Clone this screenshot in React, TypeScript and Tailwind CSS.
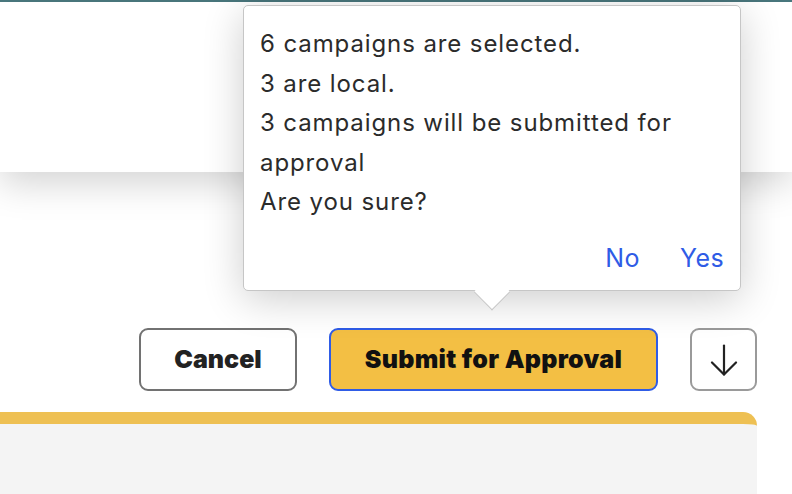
import React from "react";

function DownArrow() {
  return (
    <svg width="28" height="32" viewBox="0 0 28 32" fill="none" stroke="#222" strokeWidth="2.2" strokeLinecap="round" strokeLinejoin="round">
      <path d="M14 1.5v29" />
      <path d="M2 18.5l12 12 12-12" />
    </svg>
  );
}

export default function App() {
  return (
    <div className="relative flex h-[494px] w-[792px] flex-col overflow-hidden bg-white font-['Inter',sans-serif]">
      <div className="h-[2px] shrink-0 bg-[#4b7a80]" />
      <div className="relative z-0 h-[170px] shrink-0 bg-white shadow-[0_12px_34px_rgba(0,0,0,0.17)]" />

      {/* action row */}
      <div className="mt-[156px] flex shrink-0 justify-end gap-8 pr-[35px]">
        <button className="h-[63px] w-[158px] rounded-[9px] border-2 border-[#727272] bg-white text-[25px] font-black text-[#222]">
          Cancel
        </button>
        <button className="h-[63px] w-[329px] rounded-[9px] border-2 border-[#2f5ce6] bg-[#f3bf44] text-[25px] font-black tracking-[0.3px] text-[#111]">
          Submit for Approval
        </button>
        <button className="flex h-[63px] w-[67px] items-center justify-center rounded-[9px] border-2 border-[#9a9a9a] bg-white">
          <DownArrow />
        </button>
      </div>

      {/* table panel */}
      <div className="mt-[21px] w-[757px] flex-1 rounded-tr-[14px] border-t-[12px] border-[#eec053] bg-[#f4f4f4]" />

      {/* confirm popover */}
      <div className="absolute left-[243px] top-[5px] z-10 h-[286px] w-[498px] rounded-[5px] border border-[#c6c6c6] bg-white shadow-[0_8px_40px_rgba(0,0,0,0.2)]">
        <div className="pl-4 pr-4 pt-[18px] text-[24px] leading-[39.5px] tracking-[0.9px] text-[#2b2b2b]">
          <p>6 campaigns are selected.</p>
          <p>3 are local.</p>
          <p>3 campaigns will be submitted for approval</p>
          <p>Are you sure?</p>
        </div>
        <div className="mt-[20px] flex justify-end gap-[40px] pr-4 text-[25px] leading-[32px] tracking-[0.4px] text-[#2f5ce6]">
          <button>No</button>
          <button>Yes</button>
        </div>
        <div className="absolute left-[235px] top-[273px] h-[26px] w-[26px] rotate-45 border-b border-r border-[#c6c6c6] bg-white" />
      </div>
    </div>
  );
}
